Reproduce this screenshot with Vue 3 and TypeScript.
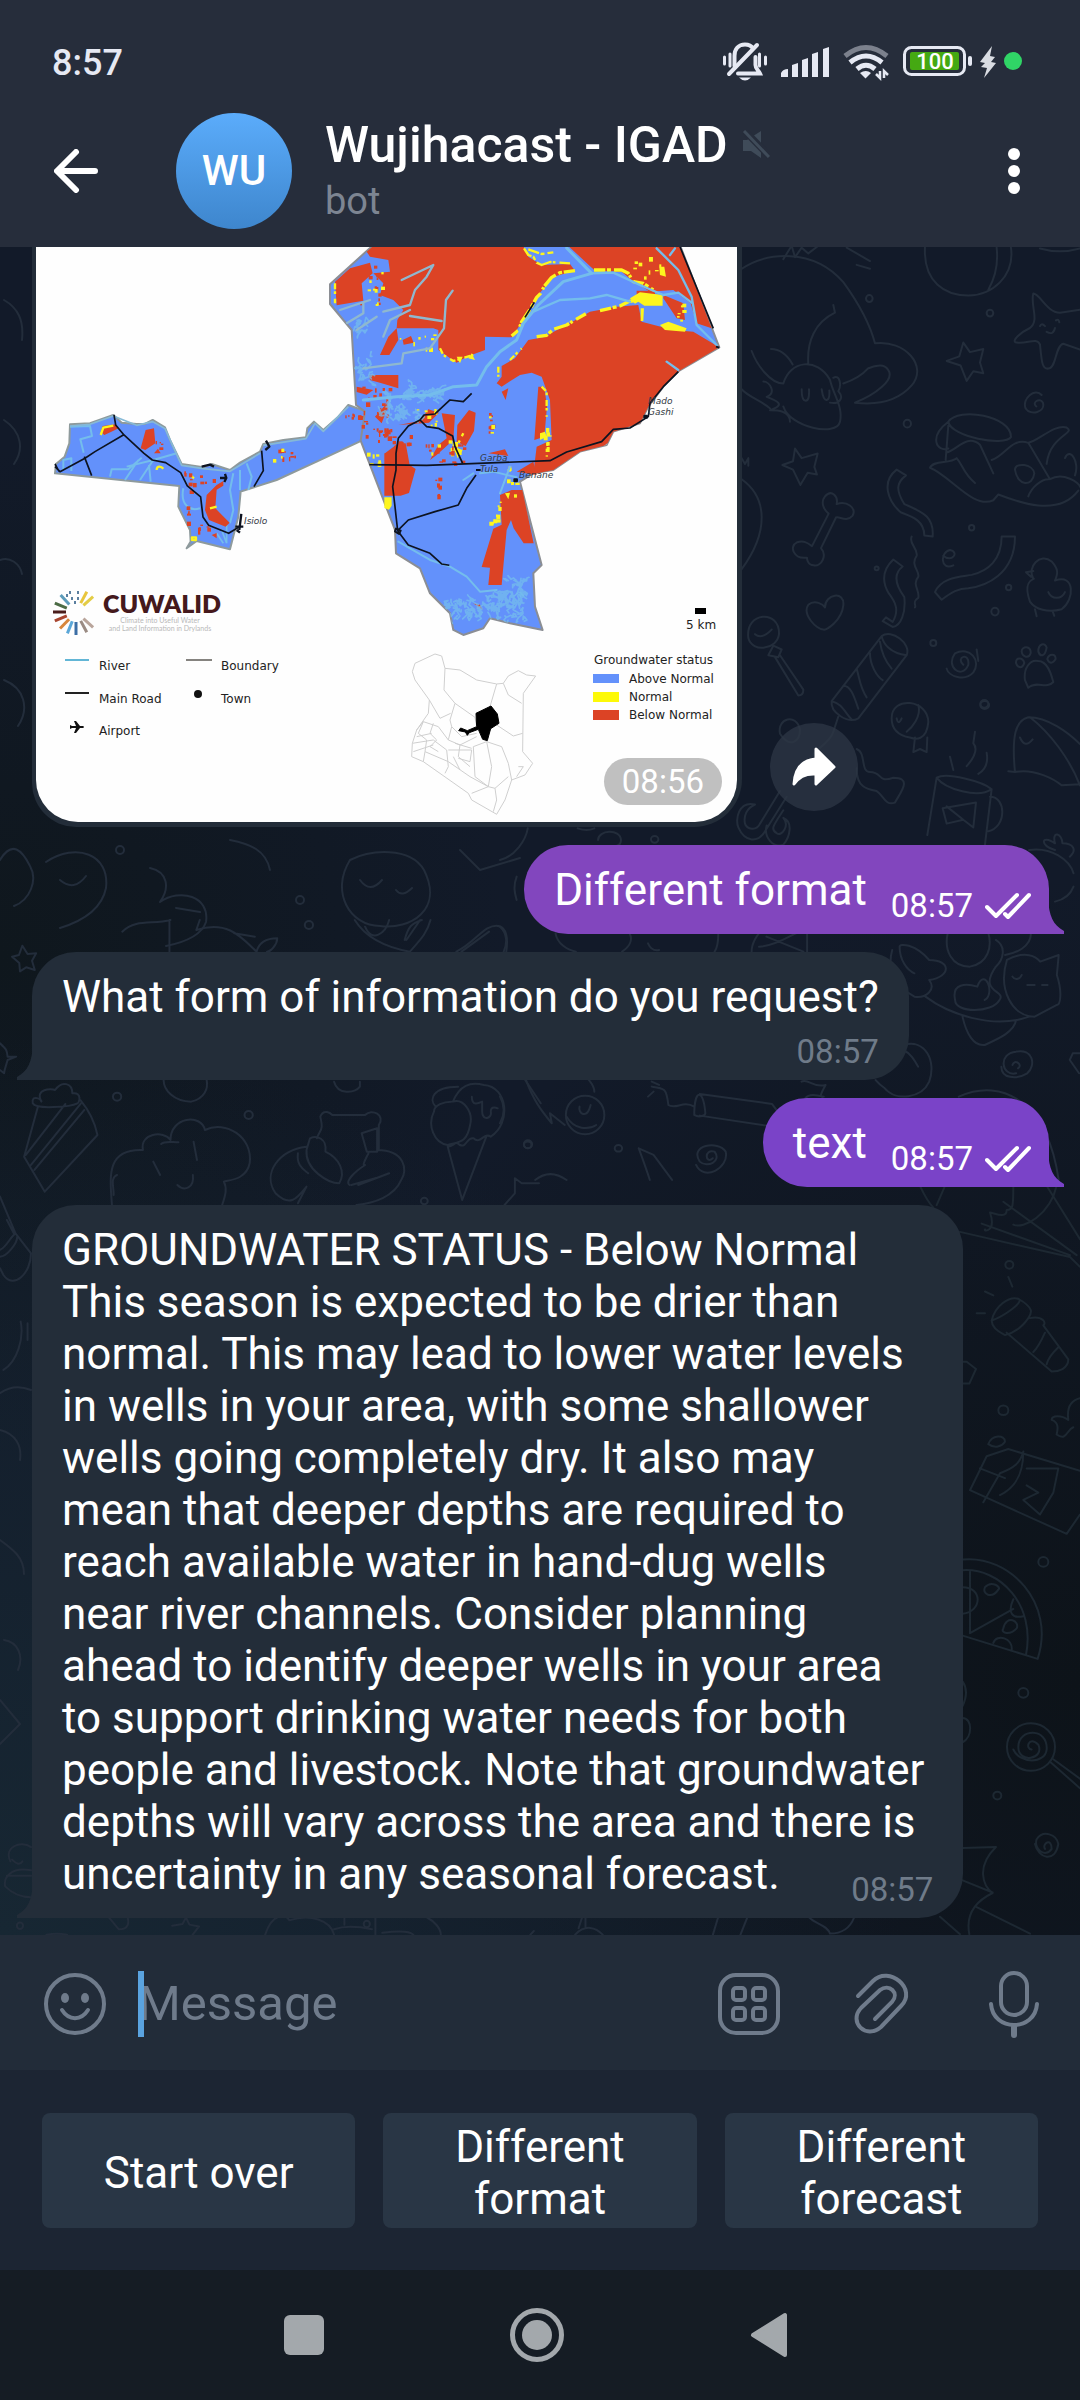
<script setup lang="ts">
interface Message {
  id: number
  out: boolean
  lines: string[]
  time: string
  layout: 'inline' | 'below' | 'overlap'
  fill?: string
}

interface Zone {
  x: number
  y: number
  w: number
  h: number
  n: number
  color: string
}

const messages: Message[] = [
  { id: 1, out: true, lines: ['Different format'], time: '08:57', layout: 'inline', fill: '#8246be' },
  { id: 2, out: false, lines: ['What form of information do you request?'], time: '08:57', layout: 'below' },
  { id: 3, out: true, lines: ['text'], time: '08:57', layout: 'inline', fill: '#7a43c8' },
  {
    id: 4,
    out: false,
    time: '08:57',
    layout: 'overlap',
    lines: [
      'GROUNDWATER STATUS - Below Normal',
      'This season is expected to be drier than',
      'normal. This may lead to lower water levels',
      'in wells in your area, with some shallower',
      'wells going completely dry. It also may',
      'mean that deeper depths are required to',
      'reach available water in hand-dug wells',
      'near river channels. Consider planning',
      'ahead to identify deeper wells in your area',
      'to support drinking water needs for both',
      'people and livestock. Note that groundwater',
      'depths will vary across the area and there is',
      'uncertainty in any seasonal forecast.',
    ],
  },
]

const replies: string[] = ['Start over', 'Different format', 'Different forecast']

// Small deterministic generator, so that the raster-like speckle is stable
let seed = 7
const rnd = (): number => {
  seed = (seed * 16807) % 2147483647
  return seed / 2147483647
}

const RED = '#dc4325'
const YELLOW = '#fdf51e'

const speckle = (zones: Zone[]) =>
  zones.flatMap((z) =>
    Array.from({ length: z.n }, () => ({
      x: Math.round(z.x + rnd() * z.w),
      y: Math.round(z.y + rnd() * z.h),
      w: 4 + Math.round(rnd() * 9),
      h: 4 + Math.round(rnd() * 10),
      color: z.color,
    })),
  )

const specks = speckle([
  { x: 120, y: 70, w: 60, h: 130, n: 10, color: RED },
  { x: 120, y: 90, w: 70, h: 110, n: 8, color: YELLOW },
  { x: 230, y: 270, w: 110, h: 60, n: 8, color: YELLOW },
  { x: 120, y: 440, w: 90, h: 150, n: 26, color: RED },
  { x: 150, y: 560, w: 120, h: 60, n: 22, color: RED },
  { x: 290, y: 500, w: 60, h: 60, n: 8, color: YELLOW },
  { x: 330, y: 600, w: 90, h: 60, n: 10, color: YELLOW },
  { x: 310, y: 610, w: 120, h: 60, n: 18, color: RED },
  { x: 140, y: 630, w: 40, h: 45, n: 6, color: YELLOW },
  { x: 345, y: 700, w: 12, h: 80, n: 8, color: RED },
  { x: 505, y: 515, w: 14, h: 70, n: 8, color: RED },
  { x: 505, y: 515, w: 14, h: 70, n: 3, color: YELLOW },
  { x: 670, y: 560, w: 12, h: 90, n: 9, color: YELLOW },
  { x: 560, y: 650, w: 30, h: 120, n: 8, color: YELLOW },
  { x: 520, y: 780, w: 20, h: 70, n: 8, color: YELLOW },
  { x: 930, y: 40, w: 90, h: 70, n: 8, color: YELLOW },
  { x: 1070, y: 190, w: 20, h: 60, n: 6, color: YELLOW },
])

const westSpecks = speckle([
  { x: 450, y: 690, w: 110, h: 40, n: 10, color: RED },
  { x: 460, y: 750, w: 20, h: 110, n: 6, color: RED },
  { x: 500, y: 850, w: 80, h: 30, n: 6, color: RED },
  { x: 740, y: 625, w: 60, h: 40, n: 9, color: RED },
  { x: 725, y: 620, w: 30, h: 40, n: 3, color: YELLOW },
  { x: 945, y: 515, w: 50, h: 20, n: 9, color: RED },
  { x: 375, y: 600, w: 20, h: 30, n: 4, color: RED },
])

// Braided channels of the swamps
const braid = (x: number, y: number, w: number, h: number, n: number): string =>
  Array.from({ length: n }, () => {
    let d = `M${Math.round(x + rnd() * w)} ${Math.round(y + rnd() * h)}`
    for (let i = 0; i < 4; i++) d += `l${Math.round(rnd() * 22 - 11)} ${Math.round(rnd() * 22 - 11)}`
    return d
  }).join('')

const braids: string[] = [
  braid(112, 345, 50, 80, 14),
  braid(190, 445, 180, 30, 36),
  braid(190, 495, 100, 40, 30),
  braid(370, 1080, 110, 60, 36),
  braid(500, 1050, 120, 80, 60),
  braid(560, 1020, 50, 40, 12),
  braid(100, 240, 80, 40, 10),
]

const logoRays = [
  { a: -62, c: '#e8c53c' }, { a: -42, c: '#e3cc45' }, { a: 62, c: '#9a8b83' }, { a: 42, c: '#b9a59b' },
  { a: 90, c: '#3c6ea5' }, { a: 112, c: '#5ba7d8' }, { a: 134, c: '#d8873c' }, { a: 157, c: '#a8452f' },
  { a: 180, c: '#4a1d1b' }, { a: 203, c: '#4c6b45' }, { a: 228, c: '#5d9cba' },
]
</script>

<template>
  <div class="app">
    <header class="top">
      <div class="status">
        <span class="clock">8:57</span>
        <div class="status-icons">
          <svg width="44" height="40" viewBox="724 40 44 40" fill="none" stroke="#e6e9f3" stroke-width="3" stroke-linecap="round">
            <path d="M725.500 56v7M731 53v12M760.500 53v12M766.500 56v7" />
            <path d="M735.500 65V55c0-7 4-11.500 10.500-11.500 4 0 6.500 1.500 8 4M756.500 56v8c0 4 3 5 4.500 8.500H739" stroke-width="4" />
            <path d="M758 44L730 73" stroke-width="4" />
            <path d="M740 76.500h12q-6 6-12 0Z" fill="#e6e9f3" stroke="none" />
          </svg>
          <svg width="48" height="40" viewBox="782 40 48 40" fill="#e6e9f3">
            <path d="M782 76v-4q2-4 7-4v8ZM793 76V64l6-2v14ZM803 76V59l6-2v19ZM813 76V53l6-2v25ZM824 76V48l6-2v30Z" />
          </svg>
          <svg width="46" height="40" viewBox="843 40 46 40" fill="none" stroke="#e6e9f3" stroke-width="5">
            <path d="M845 55q21-17 42 0" stroke="#7c818d" />
            <path d="M850 61.500q16-13 32 0" />
            <path d="M857 68q9-7.500 18 0" />
            <path d="M860 72q6-4 11 0l-5.500 5.500Z" fill="#e6e9f3" stroke="none" />
            <path d="M880 70v7l-4-4M884 77v-7l4 4" stroke-width="2.500" />
          </svg>
          <div class="power">
            <svg width="69" height="40" viewBox="904 40 69 40">
              <rect x="905.500" y="46.500" width="60" height="27" rx="7" fill="none" stroke="#e6e9f3" stroke-width="3" />
              <rect x="911" y="51" width="49" height="18" rx="2" fill="#45a912" />
              <rect x="969" y="55" width="4" height="10" rx="2" fill="#e6e9f3" />
              <text x="936" y="68" text-anchor="middle" font-size="22" font-weight="500" fill="#fff">100</text>
            </svg>
            <svg width="16" height="40" viewBox="981 40 16 40" fill="#d9dce2">
              <path d="M993 45L981 61l5 1-4 4 6 1-3 10 12-15-5-1 4-5-5-1Z" />
            </svg>
            <span class="privacy-dot"></span>
          </div>
        </div>
      </div>

      <div class="toolbar">
        <button class="icon-btn back" aria-label="Back">
          <svg width="44" height="44" viewBox="0 0 44 44" fill="none" stroke="#fff" stroke-width="6" stroke-linecap="round" stroke-linejoin="round">
            <path d="M41 22H4M22 3L3 22l19 19" />
          </svg>
        </button>
        <div class="avatar">WU</div>
        <div class="peer">
          <div class="peer-name">
            <h1>Wujihacast - IGAD</h1>
            <svg width="28" height="30" viewBox="0 0 28 30" fill="#3f4b59">
              <path d="M1 10h4l14-9v27L9 21H1Z" />
              <path d="M2 0l26 27" stroke="#262d3b" stroke-width="7" />
              <path d="M2 1l25 26" stroke="#3f4b59" stroke-width="3" />
            </svg>
          </div>
          <p>bot</p>
        </div>
        <button class="icon-btn" aria-label="More options">
          <svg width="12" height="46" viewBox="0 0 12 46" fill="#fff">
            <circle cx="6" cy="6" r="6" /><circle cx="6" cy="23" r="6" /><circle cx="6" cy="40" r="6" />
          </svg>
        </button>
      </div>
    </header>

    <main class="chat">
      <svg class="wallpaper" viewBox="0 247 1080 1688" preserveAspectRatio="xMidYMin slice" aria-hidden="true">
        <g transform="translate(700 240) scale(.3333 .3827)">
          <path d="M120 78C200 30 340 20 430 110c50 60 80 110 95 160 90-10 160 60 110 110-50 50-120 50-170 45 60-20 120-60 100-85-15-20-40-10-60-5-20 20-40 30-75 40M325 325c-5-60 20-110 80-135l-5-20M250 375c20-60 100-70 140-10 10 40 40 70 30 110-10 40-150 15-170-40M250 375c-40 0-80-50-95-85M278 325c-20-30-40-40-65-40M125 390c20 20 60 30 85 50M190 370c20 0 40 30 10 40 30 10 60 20 10 35 20 0 60 0 60 30M400 360c20-10 25 20 15 35 20 20 0 35-25 30M305 390q0 30 12 30t10-30M365 390q5 30 15 28t8-25" />
          <path d="M675 20c-5 90 60 125 130 125s140-50 128-125M890 20c5 40-5 80-25 110M1020 22q60 15 120 0M250 50l25-35 10 30 20-25 20 15 30-20M440 20l70 35M470 65l40 10" />
          <path d="M1000 140c20 0 40 50 80 50l60-8M1000 140c-10 30 20 70-10 90-25 10-60 35-40 38 30 5 60-15 70 5 5 40 5 65 25 63 25 0 20-60 45-65l50 15M1020 225q5-10 15 0M1068 210q8-5 10 5M1040 240q20 10 25-10" />
          <path d="M790 268l20 25 40-8-10 35 10 28-30-5-20 25-18-40-42-12 38-12ZM285 545l20 25 48-12-10 35 8 20-28-5-22 32-22-40-32-12 32-10Z" />
          <path d="M1025 405c-20-20-60 10-48 35 15 20 60 10 52-15-10-15-35 0-20 10M760 850c-40 15-40-35-10-40 30 5 5 35-20 15M790 1110c-25-20 20-35 15 0-20 40-70 5-40-30 45-20 80 20 55 50-25 25-75 10-80-10M830 1070l5 30" />
          <path d="M745 475c30-40 190-15 188 40-20 25-180 0-188-40ZM745 475c-60 40-35 80 0 70M745 485l-8 90M740 555c30-5 60-50 100-20l40 75M690 595c10-20 60-10 80-25 20 20 20 40 55 65M690 595c60 20 130 110 190 85l15-15c60 20 180 60 240-10M875 575c40-10 60-60 110-45 30-5 80-50 115-40 30 15-50 20-60 95M985 530l65 95c40-20 90 10 90 20M945 600c0-20 55-15 58 10-5 35-50 35-58-10M1095 570c15-30 45 10 30 45M985 670c10-25 40-45 60-45" />
          <path d="M375 670c20-20 40 0 35 20 30-10 60 10 48 30-20 20-40 0-50 5l-45 80c20 20 0 50-22 45-20 0-20-20-20-20-40 5-55-30-30-40 20-5 30 0 45 10l50-85c-15-10-25-30-11-45Z" />
          <path d="M590 600l28 15c-30 20-30 40-5 75 50 20 90 30 85 85l-25-3c0-40-40-50-70-60-40-30-60-80-13-112ZM580 835l28 18c-30 20-20 50 5 80 5 40-10 75-35 78l-30-15 10-10 20 12c20-30 10-50-12-75-20-30-20-60 14-88ZM905 775h40c0 100-90 130-140 135-30 0-50 10-80 30l-20-20c20-40 80-40 110-45 50-10 90-40 90-100ZM635 775c-10 20 20 30 15 50-20 25 10 40 5 55-20 20 5 35 0 55-20 10-5 20-10 25" />
          <path d="M1065 890c60-20 60 50 20 75-40 10-80 0-95-20-25-60 20-60 10-60-20-30 20-70 55-45 20 20 20 30 10 50ZM1000 865l-22 3 15 12M1045 920c10 20 40 20 50 0M1005 965l5 18M1058 970l5 12" />
          <path d="M375 960c0-35 60-45 55-5-5 40-50 65-60 63-20 0-65-40-45-65 20-15 45 0 50 7ZM145 1040c-10-70 95-75 92-10-5 40-80 50-92 10ZM165 1030q20 15 50-12M205 1085l15-25 25 10-10 20ZM225 1090l70 100q15 0 15-15l-70-90" />
          <path d="M545 1035c30-20 90 20 75 50-50-5-70-30-75-50ZM545 1035L395 1205c-5 30 50 60 80 45l145-165M395 1205c30 5 40 30 60 48M430 1165c20 0 30 20 45 60M470 1120c10 30 10 50 30 75M510 1080c0 30 20 60 38 70M540 1050c5 30 15 50 35 70M415 1245l-15 40c-10 30-60 50-60 60M240 1290c-10-40 50-55 60-10 0 30-30 50-60 10" />
          <path d="M575 1250c0-60 110-50 110 10-5 50-40 45-55 40-30-5-55-20-55-50ZM655 1215c10 30-20 60-35 70M645 1300l-5 38 20-8 20 8 2-38M590 1250q5 20 15 0" />
          <path d="M975 1150c-5-30 15-55 40-50 30 0 40 40 45 55-20 20-50-5-75 15ZM965 1075c0-15 30-15 27 5-5 15-25 10-27-5ZM1015 1075c0-20 20-25 25-10-5 25-20 25-25 10ZM1042 1095c5-15 25-15 25 0-10 15-20 10-25 0ZM948 1105c0-15 20-15 25 0-5 15-20 15-25 0Z" />
          <path d="M925 1388l20 2c-10-90 0-135 40-143 60 0 120 40 155 70M990 1247c60 40 120 110 150 178M945 1390c60-10 120 20 140 35l55-3M960 1300q15 30 38 5" />
          <path d="M710 1405c30-15 140 10 165 30-40 25-140 0-165-30ZM710 1405l-28 150M875 1435l-20 145M870 1455c50 0 50 80-5 90M728 1485l100-15-8 65-30-20-50 10Z M740 1480l50 35M760 1385l-10-35M800 1375c10-10 40-40 20-60l5-30M835 1395c20-10 30-30 25-55" />
          <path d="M470 1330c30 10 10 60 40 60 40 0 20 30 70 15 60 0 20 40 5 65-30 10-35-20-55-30-30-5-60-10-60-60M240 1440l-60 85c-10 20-40 15-45 0-5-20 5-40 30-50-50-10-60 40-50 60 20 40 60 40 80 10l65-90M200 1530c-10 30 20 60 50 50 20-20 30-60 0-70 20 20-5 50-20 40-20-10-10-20 20-60" />
          <path d="M125 625c80 50 80 140 0 235M125 570l10 15 10-15v20" />
          <ellipse cx="508" cy="153" rx="10" ry="9" /><ellipse cx="870" cy="191" rx="10" ry="9" /><ellipse cx="622" cy="480" rx="11" ry="10" /><ellipse cx="815" cy="752" rx="8" ry="7" /><ellipse cx="885" cy="971" rx="11" ry="10" /><ellipse cx="926" cy="908" rx="8" ry="7" /><ellipse cx="853" cy="1212" rx="12" ry="10" /><ellipse cx="700" cy="1053" rx="9" ry="8" /><ellipse cx="530" cy="858" rx="6" ry="5" />
        </g>

        <g transform="translate(500 700) scale(.37 .3333)">
          <path d="M1430 450c60-10 110 30 120 70M1500 450c-40-10-40-50 0-20-10-40 20-30 20 0 30 0 40 20 20 40M1550 560c-10 30-30 40-50 45M265 420c0-30 60-35 62 0 0 20-20 20-25 18M0 480c40-10 70-60 75-95M210 385q25 10 45 0M45 530c-10 30-5 50 0 70" />
          <path d="M1060 750c-15 60 10 110 60 140 30 5 60-20 40-50 60-10 60-60 0-60-40-50-80-50-80-40 0 40 20 70 40 80M1210 700c-10 50 10 100 60 100 50-10 60-60 50-100M1435 700c0 40-40 60-70 65M1340 720c30 20 20 60 0 80-50 80 30 70 10 100-20 40-120 40-120 0-10-50 30-50 60-40 20-60 50 20 20 40M1370 780c50-30 80-10 90 5l50-20-5 60c15 50 10 90 0 90l-60 35c-60 0-100-80-75-170ZM1150 890c60 50 180 100 280 60M1250 950c10 50 30 90 60 85 40-20 80-40 85-75M1385 830c5 10 20 10 25-5M1425 855h20M1465 855h15" />
          <path d="M150 700c5 30 30 50 55 55M350 700c10 20 0 40-20 55M590 700c0 20 0 40-10 55M680 755c0-30 20-55 20-55M830 700v55M700 740c40 0 80-30 100-40M720 710l100 45M400 730q10 25 30 20M0 680c20 20 20 50 10 75" />
          <path d="M70 1140c20 60 40 90 70 130l-5-30 40 35M240 1140q15 20 15 35M1090 1035c60-20 90 50 70 110-20 50-90 60-120 20-20-15-20-20-25-25M1090 1050c20 10 30 30 40 50M815 1145c20-10 30 20 65 10-10 20-20 40-5 35-20-5-40-10-50 5" />
          <ellipse cx="230" cy="1245" rx="52" ry="58" /><path d="M180 1250c20 40 60 40 80 25M215 1220c-5 20 20 40 30-5" />
          <path d="M525 1245c0-80 25-80 30-5 0 5-15 15-30 5ZM540 1182l195 30 20 30M540 1247l180 30M525 1220c-30-20-50 10-70-5-5-50-10-50-45-55M400 1190l15-15M410 1145l20 10" />
          <path d="M1395 1120c-40 10-50-60 0-65 45-10 55 40 30 65-30 20-70 15-70-20M1385 1095c5-20 30 0 15 10M1540 1080l8-20 20 0M1540 1080l25 40M575 1375c-20 20-25-30 5-20 20 30-20 50-40 30-30-50 50-65 70-30 10 50-60 90-80 40M375 1345c10 30 20 60 30 95M375 1345l40 20 50 75M1240 1190c120-60 240 20 270 250M0 1190q20 40 0 80M95 1440q40-35 85 0" />
          <circle cx="75" cy="1335" r="10" /><circle cx="320" cy="1345" r="10" /><circle cx="418" cy="418" r="10" /><circle cx="1310" cy="15" r="12" />
        </g>

        <g transform="translate(0 920) scale(.3444 .3333)">
          <path d="M35 110l20-5 10-28 15 25 25-2-12 22 8 28-25-8-18 12-2-25ZM0 370c20 20 20 20 22 40l25 0-25 10c-5 20-10 30-10 40L0 450M355 35c40-40 90-20 140-35M492 0v97M570 30L580 0M570 30c90-30 130 20 175 65 5-20 20-40 60-40 0 20-20 40-30 40M680 40l60 10M1030 0c30 50 80 80 160 95C1220 60 1240 40 1250 0M1060 20c20 50 60 20 70-20M1175 60c10-40 20-50 50-60M1180 60l40-60M1325 95c40-20 60-50 90-70 40-20 65 0 55 70M1340 95l80-60" />
          <path d="M95 550c-5-30 30-10 25-5-20-40 30-40 40-35 20-30 50-20 50 10 30-5 20 30 15 30-20 10-120 20-130 0ZM110 560L70 710l60 105L283 645c-10-50-30-80-50-105M190 552L75 705M235 550L90 735M245 570L100 750" />
          <path d="M325 855c-5-80-20-170 90-165-10-50 60-60 80-30 0-70 90-80 100-30 60-30 140 20 130 100-10 50-60 50-75 55 10 20 5 40-5 70M340 765c-20 10-10 30-10 60M445 725l20 40M562 665l10 55M515 795c20 20 50 10 45-30M468 672c10-10 30-5 50-5M475 480c0 30 30 65 80 65 40-10 50-40 45-65" />
          <path d="M920 655c10-30 20-20 10-65 10-25 30-10 35-5h95c20-20 60 0 40 30v75M1050 640l45-15v70h-30ZM900 655c20-10 50 0 45 40 40 20 60 60 40 95-30 0-100-40-95-100ZM890 680c-80 10-130 80-90 140 40 40 60 20 90-20l-25 50M865 700c-5 40 20 50 30 60M1095 690c80 0 90 60 70 90-20 50-80 70-130 75M1020 795l70-20-50 20 90-35M1070 700c-10 20-20 40-10 35-30 20-60 50-45 60M970 485c10 40 60 35 75 15v-15" />
          <path d="M1300 680c20 0 20-20 35-5 20 10 20-25 40-20 20 20 30-20 50-5 60-40 50-150-20-155-40-10-70 0-90 50 30-10 60 30 50 70-10 60-40 50-65 60-40-5-60-60-40-100 0-20 30-30 50-30M1265 560c-20-20-10-60 65-60M1300 680l42 160 70-190M1370 530c0 30 20 20 30 15v30c0 30 30 20 25 0 0-20 20-10 20-10M1465 855l30-35v-45l20 15h50M1525 480l45 70" />
          <path d="M0 830l45 110 45 60c0 60-50 110-80 65L0 1045M0 990c20-10 30-40 45-50M0 1010c20 0 50-40 50-60M20 900l20 40M60 1205c10 50-10 120-50 145M80 1210v50M0 1420q40-30 90-10" />
          <circle cx="897" cy="15" r="12" /><circle cx="340" cy="530" r="12" /><circle cx="722" cy="585" r="12" /><circle cx="1533" cy="673" r="12" /><circle cx="1232" cy="843" r="10" />
        </g>

        <g class="dim" transform="translate(880 1180) scale(.3333 .4847)">
          <path d="M120 12q20 30 40 45M195 12l-25 40M240 107l330 52 30 20M305 90l265 65M370 45l220 110M500 12l100 110M400 12c0 40 0 50-20 50 0 20-40 5-50 5 20 40-20 40-15 35M530 12c-20 60-100 90-130 80" />
          <path d="M335 290c10-30 50-50 80-45 20 5-40 35-80 45ZM415 245c50 20 40 30 30 40-20 20-40 30-70 35-30-10-40-20-40-30M450 285c40-5 50 10 40 15l75 70c0 20-30 25-50 25L380 315M495 315q-20 30-35 40M535 345q-30 20-35 35M315 230l25 8M290 275h25M385 200l12 20M250 375l10 0 28 15-20 30h-18" />
          <path d="M600 450c-30 5-40 20-35 45-20-10-50-10-50 0 20 5 20 15 15 30 30 15 30-10 50-15M270 640l50-70 65-15 215 45M270 640l290 90 40-40M300 595l75 20M310 665l50-60c40-10 60-20 70-45M430 560c0 60-40 80-70 90M440 595h95l-15 50-40 45-50-30 45-15-35-15M325 545c10-20 50-20 50-5-10 10-30 15-50 5" />
          <path d="M248 783c140-10 280 90 225 205L248 940M248 805c110-5 220 70 190 175M270 805v130l130-50M248 840c60 0 60 50 0 55M315 840c20-15 50 0 40 5-20 20-50 10-40-5ZM370 925c10-30 50-15 40 0-20 15-50 10-40 0ZM340 955c10-20 60-10 55 15M400 865c-20 30 0 40 30 35M248 1035q20 20 0 50M248 1110c30 0 30 40 0 50" />
          <ellipse cx="453" cy="1170" rx="72" ry="49" /><path d="M455 1175c-20 0-10-30 20-10 20 30-60 40-60 5 0-40 90-40 85 5-5 30-80 30-100 0M510 1200l90 55M520 1195l80 40M495 1380c-10-10 20-25 20 0-20 20-55 0-45-20 20-20 60-10 65 10-10 40-60 30-70 0M248 1378l100-2c-60 40-40 80-10 95-60 20-80 50-70 85M248 1445l90 25M290 1500l160 55M180 1520l60 36" />
          <ellipse cx="388" cy="175" rx="12" ry="8" /><ellipse cx="370" cy="475" rx="15" ry="10" /><ellipse cx="490" cy="788" rx="15" ry="10" /><ellipse cx="430" cy="1058" rx="15" ry="10" /><ellipse cx="352" cy="1270" rx="12" ry="8" />
        </g>

        <g transform="translate(0 1840) scale(.3444 .3571)">
          <path d="M90 85c-60-10-80 20-75 45 20 20 50 30 75 30M90 20c-30-20-80 0-60 40M35 55q20 20 30 5M20 100h70M315 215l30 35c30 0 30-20 25-35M500 240l30-5 10-18 10 20 28 5-20 25M770 265c20-60 60-60 70-40 60-20 120 0 130 40M970 250c30-10 60-10 110 0M1000 217v20M1090 217v48M1110 260c40-5 80-5 90 5M1240 217c20 10 40 30 40 48M1540 265l10-10M135 265q30-5 60 0" />
          <circle cx="58" cy="240" r="9" /><circle cx="1065" cy="235" r="9" />
          <path d="M1670 265c30-30 60-20 80 0M1690 217l-10 30M1700 217v30M2085 217l-15 48M2170 217l-20 48M2350 217c20 20 50 20 60 45 40 0 60-20 70-45" />
        </g>

        <g>
          <path d="M0 860c12-20 22-10 30 6 8 14 0 34-16 40M46 862c30-20 64-8 60 26-4 20-20 32-46 40M60 880q14 12 26-4M150 868c18 4 20 20 10 34 20-14 50-6 46 20-4 12-20 20-40 24M176 908l24 4M350 860c20-10 60-14 74 10 20 40-14 60-44 56-30 0-50-34-30-66ZM360 880q10 14 22 0M396 890q6 8 16-2M460 850l20 20 40-12M230 840c20 4 36 10 40 30M4 300c14 8 20 20 18 40M4 420c18 12 20 30 10 44M0 560c10-4 20 4 22 14M4 680c20 8 26 28 14 46M0 1430c16 4 22 16 20 30M0 1540c14 10 24 18 24 34M4 1640c14 2 20 16 14 30M0 1700l20 24-20 20" />
          <circle cx="120" cy="850" r="4" /><circle cx="300" cy="900" r="4" />
        </g>
      </svg>

      <div class="photo-row">
        <figure class="photo">
          <svg class="map" viewBox="36 247 701 575" role="img" aria-label="Groundwater status map">
            <defs>
              <clipPath id="county">
                <path d="M160 15L30 133V192L95 270 108 495 135 515 122 602 225 870 228 940 300 985 330 1060 390 1120 400 1170 430 1185 490 1165 510 1135 570 1150 668 1170 645 1100 640 1000 665 975 600 725 640 700 700 690 780 635 860 615 880 575 960 550 985 500 1030 440 1078 392 1198 322 1080 15Z" />
              </clipPath>
            </defs>
            <rect x="36" y="247" width="701" height="575" fill="#fefefe" />

            <!-- western arm -->
            <g transform="translate(30 240) scale(.3333)" fill="none" stroke-linejoin="round">
              <path d="M75 700L78 672 104 650 118 610 120 553 180 550 250 525 275 548 320 552 345 552 368 540 405 562 420 600 455 672 520 682 545 672 600 690 630 668 690 635 700 612 760 600 828 592 832 565 852 545 880 570 925 530 955 495 1010 515 1060 500V610L995 602 860 665 740 720 632 755 625 830 600 928 500 903 470 925 482 905 480 870 445 800 448 738Z" fill="#6391fb" stroke="#8e9a9c" stroke-width="6" />
              <g stroke="#74bdec" stroke-width="6">
                <path d="M120 560l60-2 6 30-35 10 10 40M240 710l5-22h50l40-35M285 720l40-60M330 720l40-60M362 725l-5-50M440 640l-70 20-80 20M460 745c-10 50 20 70 50 60M610 700l-10 50 10 60-10 40M650 670l15 40-10 40M630 690v60M100 690v-30l24-5v38" />
                <path d="M120 558L180 553 250 528 320 556 368 545 405 566 455 676 520 686 600 694 690 640M700 616L828 596 855 550 880 574 955 500" stroke="#86b9d6" stroke-width="5" />
                <path d="M560 880l20 30M575 870l15 40M590 850v60" stroke-width="5" />
              </g>
              <path d="M212 575l6-17 40-5 8 12-25 12-18 8ZM332 625l15-55 25-5 4 45-30 20ZM560 735l20-12v14l-20 12-4 56 25 25 18 18-12 12-50-20-12-30 5-45ZM1035 540l20-20v40ZM372 640h20l-8-14ZM545 885l15-6v16Z" fill="#dc4325" />
              <path d="M212 585l8-22 30-6M380 690c0-15 15-10 20-4M540 805l20-5M480 705l12 10M486 892h12v8h-12Z" stroke="#fdf51e" stroke-width="7" />
              <rect v-for="(s, i) in westSpecks" :key="i" :x="s.x" :y="s.y" :width="s.w" :height="s.h" :fill="s.color" />
              <path d="M75 680l15 15 75-40 30-20 85-50M163 650l22 57M252 525l5 30 25 30 60 55 25 20 40 8 45 30 20 40 40 33 7 60 17 25 60 24 30-18M695 632l5 60-28 48M75 672l12 22" stroke="#0d1320" stroke-width="5" />
              <path d="M585 702l4 12-6 12m-13-12h20M515 680l25-6 12 6M708 602l10 18-12 10M634 822l-6 48m-12-10h24M620 870l10 8" stroke="#0d1320" stroke-width="7" />
            </g>

            <!-- main body of the county -->
            <g transform="translate(320 240) scale(.3333)" fill="none" stroke-linejoin="round">
              <path d="M160 15L30 133V192L95 270 108 495 135 515 122 602 225 870 228 940 300 985 330 1060 390 1120 400 1170 430 1185 490 1165 510 1135 570 1150 668 1170 645 1100 640 1000 665 975 600 725 640 700 700 690 780 635 860 615 880 575 960 550 985 500 1030 440 1078 392 1198 322 1080 15Z" fill="#6391fb" stroke="#8b8e94" stroke-width="6" />
              <g fill="#dc4325">
                <path d="M160 18H610L625 50 665 75 750 72 765 92 700 110 650 170 610 240 575 292 495 290V330L440 350 410 368 355 330V270L340 265H230L232 240 250 210 220 180 180 165 190 130 160 100 210 95 205 60 150 50 140 35Z" />
                <path d="M45 125L90 85 150 68 158 100 125 130 130 182 50 196ZM180 345L205 290 230 265 235 300 208 345ZM248 300l25-12 8 20-30 6Z" />
                <path d="M745 18H1080L1175 265 1130 250 1112 190 1060 150 990 155 935 120 905 95 825 92Z" />
                <path d="M545 440L530 430 545 410 545 378 585 355 625 300 670 292 740 255 810 215 890 200 955 195 965 245 1060 270 1120 275 1198 322 1078 392 1030 440 985 500 960 550 880 575 860 615 780 635 700 690 640 702 650 620 695 600 690 480 665 410 635 398 600 405Z" />
                <path d="M655 440h18l8 60-8 90-30 10ZM1030 165l60 25 5 50-25-5-40-60ZM950 152h55v14h-55Z" />
                <path d="M148 405h87v40l-50-15-35-10ZM110 440l50 10-20 14-30-8ZM165 530l40-45-5 25-15 40ZM195 640l40-30h22l12 65 18 12-20 72-25 8H193V640ZM235 555l65-12 25-35 32 10-30 30ZM365 520l40 5-5 75-50 45-20 15 25-45 25-20ZM410 605l2-50 35-45 20 8-5 55-25 45ZM505 640l50-12 10 20ZM545 455l20-10-8 35ZM590 695l50-30 10 40Z" />
                <path d="M540 765l35-15 32 0 34 160h-30l-30-45-8-25-13 30-15 165h-40l5-52-25-2 35-115 25-12ZM460 1090l20 4 8 16Z" />
              </g>
              <path fill="#fdf51e" d="M930 175l30-18 68 8v32h-55l-18-12-10 6ZM962 205l10 0-2 38-8 0ZM1020 255l25-10 55 20-5 10-60-5ZM193 772h22v25l-8 12-14-5ZM400 620l28 10-15 25ZM660 580l15-5 5 15-20 10ZM410 350h18l-8 20ZM1018 80h15l5 30-18-5ZM555 760l15-2-5 20ZM508 845h16l-4 12h-12ZM455 340l10 20-20-5Z" />
              <g stroke="#fdf51e" stroke-width="7" stroke-dasharray="34 5 12 9 48 4 8 12">
                <path d="M612 25L625 45 640 50 650 68 665 75 690 66 750 70" />
                <path d="M625 28l40 14 35-5" />
                <path d="M765 92L720 98 695 112 672 140 662 160 650 172 632 205 605 245 596 270 575 288" stroke-width="10" />
                <path d="M822 90H905L925 100 940 125 970 130 1000 150" stroke-width="10" />
                <path d="M650 290L680 286 700 268 740 255 765 240 800 220M840 212L870 205 900 198 925 185 955 180" stroke-width="10" />
                <path d="M360 325L370 345 400 363 460 345M570 360L605 325M535 380V410M45 130V190M665 440l15 15v75M405 630l25-50" stroke-dasharray="18 6 8 14" />
              </g>
              <rect v-for="(s, i) in specks" :key="i" :x="s.x" :y="s.y" :width="s.w" :height="s.h" :fill="s.color" />
              <g stroke="#74bdec" stroke-linecap="round" clip-path="url(#county)">
                <path v-for="(b, i) in braids" :key="i" :d="b" stroke-width="5" opacity=".75" />
                <path d="M740 24L815 100 730 125 655 195 610 250 590 300 540 335 500 380 470 435 400 440 330 465 230 470 130 480" stroke-width="9" />
                <path d="M815 100L880 98 960 135 1030 165 1075 158M640 215L720 180 810 175 860 165 930 185M1010 25l65 65 40 80 15 85 60 60M1075 158l40 30M1040 365l35 25M1050 45l15-20" stroke-width="7" />
                <path d="M245 120L340 75 320 110 285 150 270 195 190 215M398 152L378 180 372 265 330 325 250 340 245 370 130 385M190 290l20-50 60-30M270 228l95 15M60 210l90-30M80 250l50-30v-30M110 270l60-40" stroke-width="7" stroke="#8fb8cf" />
                <path d="M235 905L330 960 390 980 440 1010 480 1055 530 1050M480 700L520 695 590 712M430 720l30-20M570 680l-30 80" stroke-width="6" />
                <path d="M870 610l-20 15M985 540l-20 20-80 20" stroke="#8fb4c4" stroke-width="10" />
              </g>
              <g stroke="#0d1320" stroke-width="5">
                <path d="M148 674L320 676 690 662 740 636 845 605 880 568 930 564 985 530 990 490 1030 440 1075 395M1080 20L1180 265" />
                <path d="M455 460L430 485 390 480 345 522 312 525 300 540 265 558 235 595 228 640 228 690 218 740 225 800 233 872 265 840 345 815 415 795 440 745 468 705M300 540L320 560 355 565 398 588 405 620 428 670M233 872L265 915 330 940 365 972 388 976M615 232l28-45" />
                <path d="M228 866l14 6-5 10-12-8ZM583 718h8v6h-8ZM973 527h8v6h-8ZM468 690h14M1188 320l10 3" stroke-width="6" />
              </g>
            </g>

            <g class="places">
              <text x="244" y="524">Isiolo</text>
              <text x="648" y="404">Mado</text>
              <text x="648" y="415">Gashi</text>
              <text x="480" y="461">Garba</text>
              <text x="480" y="472">Tula</text>
              <text x="519" y="478">Benane</text>
            </g>

            <!-- CUWALID logo -->
            <g transform="translate(76 612)">
              <path v-for="r in logoRays" :key="r.a" d="M10 0H23" :transform="`rotate(${r.a})`" :stroke="r.c" stroke-width="3" />
              <path d="M2-12v-3M2-18v-3M-4-12v-3M-6-18v-3M-1-8v-3M-9-15v-3" stroke="#5b7f9f" stroke-width="2" />
            </g>
            <text class="brand" x="103" y="613">CUWALID</text>
            <text class="tagline" x="160" y="623">Climate into Useful Water</text>
            <text class="tagline" x="160" y="631">and Land Information in Drylands</text>

            <!-- symbols legend -->
            <path d="M65 660H89" stroke="#62b6d6" stroke-width="2" />
            <path d="M65 693H89" stroke="#222" stroke-width="2" />
            <path d="M186 660H212" stroke="#85837f" stroke-width="2" />
            <circle cx="198" cy="694" r="4" fill="#111" />
            <path d="M70 725l2 1h4l-2-5h2l4 5h3q2 1 0 2h-3l-4 5h-2l2-5h-4l-2 1Z" fill="#111" />
            <g class="legend">
              <text x="99" y="670">River</text>
              <text x="99" y="703">Main Road</text>
              <text x="99" y="735">Airport</text>
              <text x="221" y="670">Boundary</text>
              <text x="221" y="703">Town</text>
              <text x="686" y="629">5 km</text>
              <text x="594" y="664">Groundwater status</text>
              <text x="629" y="683">Above Normal</text>
              <text x="629" y="701">Normal</text>
              <text x="629" y="719">Below Normal</text>
            </g>
            <rect x="695" y="608" width="11" height="6" />
            <rect x="593" y="674" width="26" height="9" fill="#6391fb" />
            <rect x="593" y="692" width="26" height="10" fill="#fdf908" />
            <rect x="593" y="710" width="26" height="10" fill="#dc4325" />

            <!-- country inset -->
            <g transform="translate(380 580) scale(.3333)" fill="none" stroke="#cfcfcf" stroke-width="3" stroke-linejoin="round">
              <path d="M97 275L105 250 165 222 185 228 195 265 240 270 290 300 350 312 370 310 385 288 415 272 440 285 467 288 430 340 428 515 458 550 435 585 395 600 375 660 350 703 275 660 265 640 130 545 95 530 97 490 110 450 145 400 148 360 105 300Z" />
              <path d="M195 265L192 330 225 370 285 412 290 440M350 312L330 380 350 400M370 310L385 345 425 370M350 435L400 468 428 460M225 370L210 420 215 440 205 480 240 495 290 470M148 360L180 415 212 400M110 450L130 425 175 440 205 480M97 490L160 480 200 510 205 560 195 580M130 545L135 515 205 545 270 590 325 620 275 640M320 485L365 500 385 550 395 600M320 485L280 500 285 590 325 620 335 560 320 485M325 620L345 625 385 590M345 625L350 660 340 695M240 495L235 530 270 560M205 510L275 510 270 545 235 535M130 425l-15 35 25 20-5 35M160 430l-10 30 20 20-20 20 25 15M215 440l30 30 45-10M410 590l20-30-15 0M110 470l45-10M100 515l60-20M220 530l20 40M225 490l50 15" />
              <path d="M288 400L333 378 352 402 357 430 332 446 322 482 308 478 295 448 268 458 262 466 256 456 236 452 242 444 262 452 290 440Z" fill="#000" stroke="#000" />
            </g>
          </svg>
          <figcaption class="photo-time">08:56</figcaption>
        </figure>
        <button class="share" aria-label="Share">
          <svg width="46" height="40" viewBox="0 0 46 40" fill="#fff" stroke="#fff" stroke-width="3" stroke-linejoin="round">
            <path d="M25 2L43 20 25 37V27C13 26 7 31 3 37 4 22 11 13 25 12Z" />
          </svg>
        </button>
      </div>

      <article
        v-for="m in messages"
        :key="m.id"
        :class="['bubble', m.out ? 'out' : 'in', m.layout]"
        :style="m.fill ? { background: m.fill } : undefined"
      >
        <p><span v-for="line in m.lines" :key="line" class="line">{{ line }}</span></p>
        <span class="meta">
          <time>{{ m.time }}</time>
          <svg v-if="m.out" width="46" height="28" viewBox="0 0 46 28" fill="none" stroke="#fff" stroke-width="4" stroke-linecap="round" stroke-linejoin="round">
            <path d="M2 15l9 9L32 3M20 22l3 3L44 3" />
          </svg>
        </span>
        <svg class="tail" width="16" height="36" viewBox="0 0 16 36" :fill="m.fill ?? '#232d39'">
          <path d="M0 0C1 18 5 27 16 33V36H0Z" />
        </svg>
      </article>
    </main>

    <form class="composer" @submit.prevent>
      <button type="button" class="icon-btn" aria-label="Emoji">
        <svg width="64" height="64" viewBox="0 0 64 64" fill="none" stroke="#6f7b8b" stroke-width="4" stroke-linecap="round">
          <circle cx="32" cy="32" r="29" />
          <path d="M19 38c7 11 19 11 26 0" />
          <ellipse cx="22" cy="26" rx="4" ry="5" fill="#6f7b8b" stroke="none" />
          <ellipse cx="42" cy="26" rx="4" ry="5" fill="#6f7b8b" stroke="none" />
        </svg>
      </button>
      <div class="field">
        <input type="text" placeholder="Message" aria-label="Message" />
        <span class="caret"></span>
      </div>
      <button type="button" class="icon-btn" aria-label="Bot keyboard">
        <svg width="64" height="64" viewBox="0 0 64 64" fill="none" stroke="#6f7b8b" stroke-width="4">
          <rect x="3" y="3" width="58" height="58" rx="16" />
          <rect x="16" y="16" width="12" height="12" rx="3" /><rect x="36" y="16" width="12" height="12" rx="3" />
          <rect x="16" y="36" width="12" height="12" rx="3" /><rect x="36" y="36" width="12" height="12" rx="3" />
        </svg>
      </button>
      <button type="button" class="icon-btn attach" aria-label="Attach">
        <svg width="56" height="64" viewBox="0 0 56 64" fill="none" stroke="#6f7b8b" stroke-width="4" stroke-linecap="round">
          <path d="M4 24L19 9C35-7 64 17 47 34L27 55C12 68-6 50 7 36L26 18C35 11 46 21 38 30L21 47" />
        </svg>
      </button>
      <button type="button" class="icon-btn mic" aria-label="Record voice">
        <svg width="50" height="68" viewBox="0 0 50 68" fill="none" stroke="#6f7b8b" stroke-width="4" stroke-linecap="round">
          <rect x="12" y="3" width="26" height="42" rx="13" />
          <path d="M2 34C4 62 46 62 48 34" />
          <path d="M25 57v8" stroke-width="6" />
        </svg>
      </button>
    </form>

    <div class="keyboard">
      <button v-for="r in replies" :key="r">{{ r }}</button>
    </div>

    <nav class="system-nav">
      <button class="icon-btn" aria-label="Recents">
        <svg width="40" height="40" viewBox="0 0 40 40" fill="#a3a8ac"><rect width="40" height="40" rx="6" /></svg>
      </button>
      <button class="icon-btn" aria-label="Home">
        <svg width="54" height="54" viewBox="0 0 54 54" fill="#a3a8ac">
          <circle cx="27" cy="27" r="24.500" fill="none" stroke="#a3a8ac" stroke-width="5" /><circle cx="27" cy="27" r="15" />
        </svg>
      </button>
      <button class="icon-btn" aria-label="Back">
        <svg width="38" height="46" viewBox="0 0 38 46" fill="#a3a8ac" stroke="#a3a8ac" stroke-width="4" stroke-linejoin="round">
          <path d="M35 3v40L3 23Z" />
        </svg>
      </button>
    </nav>
  </div>
</template>

<style>
body {
  margin: 0;
  background: #151c24;
}
</style>

<style scoped>
.app {
  display: flex;
  flex-direction: column;
  min-height: 100vh;
  font-family: Roboto, 'Liberation Sans', sans-serif;
  color: #fff;
}
button {
  border: 0;
  padding: 0;
  font: inherit;
  color: inherit;
}
svg {
  display: block;
  flex: none;
}
h1, p, figure {
  margin: 0;
}
.icon-btn {
  display: flex;
  background: none;
}

.top {
  background: #262d3b;
}
.status {
  display: flex;
  align-items: center;
  justify-content: space-between;
  height: 68px;
  padding: 27px 58px 0 52px;
}
.clock {
  padding-top: 4px;
  font-size: 36px;
  line-height: 42px;
  font-weight: 500;
  color: #e6e9f3;
}
.status-icons {
  display: flex;
  align-items: center;
  gap: 14px;
}
.power {
  display: flex;
  align-items: center;
  gap: 8px;
}
.privacy-dot {
  width: 18px;
  height: 18px;
  border-radius: 50%;
  background: #30d566;
}
.toolbar {
  display: flex;
  align-items: center;
  height: 152px;
  padding: 0 60px 0 54px;
}
.back {
  margin-right: 78px;
}
.avatar {
  width: 116px;
  height: 116px;
  border-radius: 50%;
  background: linear-gradient(#5bacfb, #3e86cd);
  font-size: 42px;
  line-height: 116px;
  font-weight: 500;
  text-align: center;
}
.peer {
  flex: 1;
  padding-left: 33px;
}
.peer-name {
  display: flex;
  align-items: center;
  gap: 14px;
}
h1 {
  font-size: 50px;
  line-height: 56px;
  font-weight: 500;
}
.peer p {
  padding-top: 4px;
  font-size: 38px;
  line-height: 48px;
  color: #7d8592;
}

.chat {
  position: relative;
  flex: 1;
  display: flex;
  flex-direction: column;
  gap: 18px;
  padding: 0 32px 17px;
  overflow: hidden;
  background:
    radial-gradient(circle at 0 100%, #172733 0, rgba(23, 39, 51, 0) 45%),
    radial-gradient(circle at 100% 85%, #0d1319 0, rgba(13, 19, 25, 0) 45%),
    radial-gradient(circle at 0 42%, #0f171d 0, rgba(15, 23, 29, 0) 35%),
    #121a29;
}
.wallpaper {
  position: absolute;
  inset: 0;
  width: 100%;
  height: 100%;
  fill: none;
  stroke: #232d3b;
  stroke-width: 2;
  stroke-linecap: round;
  stroke-linejoin: round;
}
.wallpaper * {
  vector-effect: non-scaling-stroke;
}
.dim {
  stroke: #1d2832;
}
.photo-row {
  position: relative;
  display: flex;
  align-items: flex-end;
  gap: 28px;
}
.photo {
  position: relative;
  flex: 0 1 701px;
  padding: 0 5px 5px 4px;
  background: #232d39;
  border-radius: 0 0 48px 44px;
}
.map {
  width: 100%;
  border-radius: 0 0 42px 42px;
}
.legend {
  font: 12px 'DejaVu Sans', sans-serif;
  fill: #222;
}
.places {
  font: italic 9px 'DejaVu Sans', sans-serif;
  fill: #333a45;
}
.brand {
  font: 800 25px Lato, sans-serif;
  fill: #45191c;
}
.tagline {
  font: 7px Lato, sans-serif;
  text-anchor: middle;
  fill: #b9b9b9;
}
.photo-time {
  position: absolute;
  right: 20px;
  bottom: 22px;
  padding: 0 18px;
  border-radius: 24px;
  background: #c0c0c0;
  font-size: 33px;
  line-height: 47px;
}
.share {
  display: grid;
  place-items: center;
  width: 88px;
  height: 88px;
  margin-bottom: 16px;
  border-radius: 50%;
  background: rgba(45, 55, 70, 0.75);
}

.bubble {
  position: relative;
  display: flex;
  font-size: 44px;
  line-height: 52px;
}
.line {
  display: block;
  width: fit-content;
}
.in {
  flex-direction: column;
  align-self: flex-start;
  padding: 19px 30px 9px;
  border-radius: 44px 44px 44px 0;
  background: #232d39;
}
.out {
  align-self: flex-end;
  gap: 24px;
  margin-right: -1px;
  padding: 19px 18px 9px 30px;
  border-radius: 44px 44px 0 44px;
}
.out p {
  padding-bottom: 9px;
}
.meta {
  display: flex;
  align-items: center;
  align-self: flex-end;
  gap: 12px;
  font-size: 33px;
  line-height: 39px;
}
.in .meta {
  color: #6f7b89;
}
.below .meta {
  margin-top: 9px;
}
.overlap p {
  padding-right: 9px;
}
.overlap .meta {
  margin-top: -30px;
}
.tail {
  position: absolute;
  bottom: 0;
}
.out .tail {
  right: -15px;
}
.in .tail {
  left: -15px;
  transform: scaleX(-1);
}

.composer {
  position: relative;
  display: flex;
  align-items: center;
  height: 133px;
  padding: 2px 41px 0 43px;
  background: #222c39;
}
.field {
  position: relative;
  flex: 1;
  margin-left: 31px;
}
.field input {
  box-sizing: border-box;
  width: 100%;
  height: 66px;
  border: 0;
  padding: 0;
  background: none;
  outline: none;
  font: 49px/66px Roboto, sans-serif;
  color: #fff;
}
.field input::placeholder {
  color: #6f7b8b;
  opacity: 1;
}
.caret {
  position: absolute;
  left: 0;
  top: 0;
  width: 6px;
  height: 66px;
  background: #5aa3df;
}
.attach {
  margin-left: 73px;
}
.mic {
  margin-left: 79px;
}

.keyboard {
  display: grid;
  grid-template-columns: repeat(3, 1fr);
  gap: 28px;
  padding: 43px 42px 42px;
  background: #1c2533;
}
.keyboard button {
  min-height: 115px;
  padding: 4px 50px 0;
  border-radius: 8px;
  background: #293645;
  font-size: 44px;
  line-height: 52px;
}

.system-nav {
  display: flex;
  align-items: center;
  justify-content: center;
  gap: 186px;
  height: 130px;
  padding-right: 9px;
  background: #151c24;
}
</style>
